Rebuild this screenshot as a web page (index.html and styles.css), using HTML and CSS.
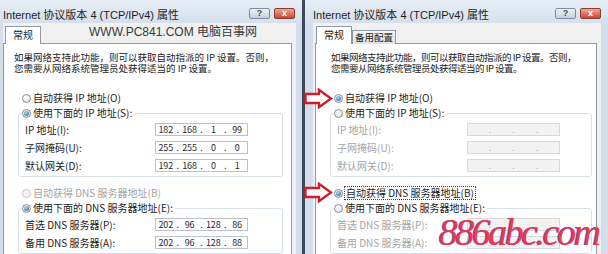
FILE: index.html
```html
<!DOCTYPE html>
<html lang="zh-CN">
<head>
    <meta charset="UTF-8">
    <title>Internet 协议版本 4 (TCP/IPv4) 属性</title>
    <link rel="stylesheet" href="styles.css">
</head>
<body>
    <div class="screen">
        <!-- Left dialog: manual address -->
        <div class="win win-left">
            <div class="titlebar">
                <span class="title">Internet 协议版本 4 (TCP/IPv4) 属性</span>
                <div class="caption-btns">
                    <span class="cbtn help">?</span>
                    <span class="cbtn close">x</span>
                </div>
            </div>
            <div class="body">
                <div class="tabs">
                    <span class="tab active">常规</span>
                    <span class="site-mark">WWW.PC841.COM 电脑百事网</span>
                </div>
                <div class="panel">
                    <p class="intro">如果网络支持此功能，则可以获取自动指派的 IP 设置。否则，<br>您需要从网络系统管理员处获得适当的 IP 设置。</p>

                    <div class="opt"><span class="radio"></span>自动获得 IP 地址(O)</div>
                    <fieldset class="group">
                        <legend><span class="opt"><span class="radio on"></span>使用下面的 IP 地址(S):</span></legend>
                        <div class="row">
                            <span class="row-label">IP 地址(I):</span>
                            <div class="ipbox"><span>182</span><i>.</i><span>168</span><i>.</i><span>1</span><i>.</i><span>99</span></div>
                        </div>
                        <div class="row">
                            <span class="row-label">子网掩码(U):</span>
                            <div class="ipbox"><span>255</span><i>.</i><span>255</span><i>.</i><span>0</span><i>.</i><span>0</span></div>
                        </div>
                        <div class="row">
                            <span class="row-label">默认网关(D):</span>
                            <div class="ipbox"><span>192</span><i>.</i><span>168</span><i>.</i><span>0</span><i>.</i><span>1</span></div>
                        </div>
                    </fieldset>

                    <div class="opt dim dns-auto"><span class="radio off"></span>自动获得 DNS 服务器地址(B)</div>
                    <fieldset class="group">
                        <legend><span class="opt"><span class="radio on"></span>使用下面的 DNS 服务器地址(E):</span></legend>
                        <div class="row">
                            <span class="row-label">首选 DNS 服务器(P):</span>
                            <div class="ipbox"><span>202</span><i>.</i><span>96</span><i>.</i><span>128</span><i>.</i><span>86</span></div>
                        </div>
                        <div class="row">
                            <span class="row-label">备用 DNS 服务器(A):</span>
                            <div class="ipbox"><span>202</span><i>.</i><span>96</span><i>.</i><span>128</span><i>.</i><span>88</span></div>
                        </div>
                    </fieldset>
                </div>
            </div>
        </div>

        <div class="divider"></div>

        <!-- Right dialog: automatic address -->
        <div class="win win-right">
            <div class="titlebar">
                <span class="title">Internet 协议版本 4 (TCP/IPv4) 属性</span>
                <div class="caption-btns">
                    <span class="cbtn help">?</span>
                    <span class="cbtn close">x</span>
                </div>
            </div>
            <div class="body">
                <div class="tabs">
                    <span class="tab active">常规</span>
                    <span class="tab">备用配置</span>
                </div>
                <div class="panel">
                    <p class="intro">如果网络支持此功能，则可以获取自动指派的 IP 设置。否则，<br>您需要从网络系统管理员处获得适当的 IP 设置。</p>

                    <div class="opt"><span class="radio on"></span>自动获得 IP 地址(O)</div>
                    <fieldset class="group">
                        <legend><span class="opt"><span class="radio"></span>使用下面的 IP 地址(S):</span></legend>
                        <div class="row dim">
                            <span class="row-label">IP 地址(I):</span>
                            <div class="ipbox off"><span></span><i>.</i><span></span><i>.</i><span></span><i>.</i><span></span></div>
                        </div>
                        <div class="row dim">
                            <span class="row-label">子网掩码(U):</span>
                            <div class="ipbox off"><span></span><i>.</i><span></span><i>.</i><span></span><i>.</i><span></span></div>
                        </div>
                        <div class="row dim">
                            <span class="row-label">默认网关(D):</span>
                            <div class="ipbox off"><span></span><i>.</i><span></span><i>.</i><span></span><i>.</i><span></span></div>
                        </div>
                    </fieldset>

                    <div class="opt dns-auto"><span class="radio on"></span><span class="focus">自动获得 DNS 服务器地址(B)</span></div>
                    <fieldset class="group">
                        <legend><span class="opt"><span class="radio"></span>使用下面的 DNS 服务器地址(E):</span></legend>
                        <div class="row dim">
                            <span class="row-label">首选 DNS 服务器(P):</span>
                            <div class="ipbox off"><span></span><i>.</i><span></span><i>.</i><span></span><i>.</i><span></span></div>
                        </div>
                        <div class="row dim">
                            <span class="row-label">备用 DNS 服务器(A):</span>
                            <div class="ipbox off"><span></span><i>.</i><span></span><i>.</i><span></span><i>.</i><span></span></div>
                        </div>
                    </fieldset>
                </div>
            </div>
        </div>

        <!-- Overlays -->
        <svg class="arrow arrow-ip" width="29" height="21" viewBox="0 0 29 21">
            <path d="M1.5 6 H15 V1.8 L27 10.5 L15 19.2 V15 H1.5 Z" fill="#fff" stroke="#cc1f2b" stroke-width="2.4" stroke-linejoin="miter"/>
        </svg>
        <svg class="arrow arrow-dns" width="29" height="21" viewBox="0 0 29 21">
            <path d="M1.5 6 H15 V1.8 L27 10.5 L15 19.2 V15 H1.5 Z" fill="#fff" stroke="#cc1f2b" stroke-width="2.4" stroke-linejoin="miter"/>
        </svg>
        <div class="brand-mark">886abc.com</div>
    </div>
</body>
</html>
```

FILE: styles.css
```css
/* Global */
:root {
    --frame: #d3deea;
    --tab-border: #8f9bab;
    --group-border: #d5dfe5;
    --dim-text: #a4a4a4;
}

* {
    box-sizing: border-box;
}

body {
    margin: 0;
    width: 608px;
    height: 254px;
    overflow: hidden;
    font-family: "Noto Sans CJK SC", "Liberation Sans", sans-serif;
    font-size: 10px;
    color: #1b1b1b;
    background: #ffffff;
}

.screen {
    position: relative;
    display: flex;
    height: 254px;
}

/* Windows */
.win {
    display: flex;
    flex-direction: column;
    height: 254px;
}

.win-left {
    width: 302px;
}

.win-right {
    width: 303px;
}

.divider {
    width: 3px;
    background: #3e4858;
}

.titlebar {
    height: 23px;
    display: flex;
    align-items: flex-start;
    justify-content: space-between;
    padding: 8px 7px 0 3px;
    background: linear-gradient(#e7eef6, #d5e0ec);
    font-family: "Liberation Sans", "Noto Sans CJK SC", sans-serif;
    font-size: 11px;
    line-height: 14px;
    color: #1e1e1e;
}

.win-right .titlebar {
    padding-left: 8px;
}

.caption-btns {
    display: flex;
    gap: 4px;
}

.cbtn {
    width: 21px;
    height: 11px;
    display: flex;
    align-items: center;
    justify-content: center;
    border-radius: 2px;
    font-size: 9px;
    line-height: 9px;
    font-weight: bold;
}

.cbtn.help {
    border: 1px solid #7d8ea3;
    background: linear-gradient(#eef3f8, #c2d0df);
    color: #3c4e66;
}

.cbtn.close {
    border: 1px solid #8a3a2e;
    background: linear-gradient(#eba896, #c94a33);
    color: #ffffff;
}

.body {
    flex: 1;
    display: flex;
    flex-direction: column;
    background: #f0f0f0;
}

.win-left .body {
    border-left: 3px solid var(--frame);
    border-right: 6px solid var(--frame);
    padding-right: 4px;
}

.win-right .body {
    border-left: 8px solid var(--frame);
    border-right: 7px solid var(--frame);
    padding-left: 2px;
    padding-right: 4px;
}

/* Tabs */
.tabs {
    height: 17px;
    margin-top: 3px;
    display: flex;
    align-items: flex-end;
    padding-left: 2px;
}

.win-right .tabs {
    padding-left: 1px;
}

.tab {
    position: relative;
    z-index: 1;
    height: 14px;
    margin-bottom: -1px;
    padding: 0 2px;
    border: 1px solid var(--tab-border);
    border-bottom: none;
    background: linear-gradient(#f4f4f4, #e1e1e1);
    font-size: 9.5px;
    line-height: 12px;
}

.tab.active {
    height: 18px;
    padding: 0 7px;
    background: #ffffff;
    font-size: 10px;
    line-height: 15px;
}

.site-mark {
    align-self: flex-start;
    margin-left: 48px;
    font-family: "Liberation Sans", "Noto Sans CJK SC", sans-serif;
    font-size: 12px;
    line-height: 13px;
    color: #3a3a3a;
}

/* Tab page */
.panel {
    flex: 1;
    padding-top: 8px;
    border: 1px solid var(--tab-border);
    border-bottom: none;
    background: #ffffff;
}

.intro {
    margin: 0 0 0 10px;
    font-size: 9.5px;
    line-height: 11px;
    white-space: nowrap;
}

.win-right .intro {
    margin-left: 15px;
    letter-spacing: -0.5px;
}

.opt {
    display: flex;
    align-items: center;
    gap: 2px;
    height: 14px;
    line-height: 14px;
    white-space: nowrap;
}

.panel > .opt {
    margin: 17px 0 0 18px;
}

.panel > .opt.dns-auto {
    margin-top: 9px;
}

.dim {
    color: var(--dim-text);
}

.focus {
    outline: 1px dotted #444;
    outline-offset: 0;
    padding: 0 1px;
    line-height: 12px;
}

/* Radio buttons */
.radio {
    position: relative;
    flex: none;
    width: 9px;
    height: 9px;
    border: 1px solid #8a8f96;
    border-radius: 50%;
    background: radial-gradient(circle at 40% 35%, #ffffff, #d6d9dd);
}

.radio.on::after {
    content: "";
    position: absolute;
    inset: 1px;
    border-radius: 50%;
    background: radial-gradient(circle at 40% 35%, #a7d8f3, #1d5e98);
}

.radio.off {
    border-color: #c4c7cb;
    background: #f3f3f3;
}

/* Group boxes */
.group {
    margin: 1px 8px 0 14px;
    padding: 0 0 2px 3px;
    min-inline-size: 0;
    border: 1px solid var(--group-border);
    border-radius: 3px;
}

.win-right .group {
    margin-right: 4px;
}

.group legend {
    padding: 0 2px 0 0;
}

.row {
    display: flex;
    align-items: center;
    height: 18px;
    padding-left: 3px;
    white-space: nowrap;
}

.row-label {
    width: 130px;
    flex: none;
}

/* IP address field */
.ipbox {
    width: 93px;
    height: 13px;
    display: flex;
    align-items: center;
    border: 1px solid #bcc1c8;
    background: #ffffff;
    font-size: 9px;
    line-height: 11px;
    color: #2a2a2a;
}

.ipbox span {
    flex: 1;
    text-align: center;
}

.ipbox i {
    width: 4px;
    font-style: normal;
    text-align: center;
}

.ipbox.off {
    border-color: #d9d9d9;
    background: #f2f2f2;
    color: #b4b4b4;
}

/* Overlays */
.arrow {
    position: absolute;
    left: 304px;
}

.arrow-ip {
    top: 88px;
}

.arrow-dns {
    top: 182px;
}

.brand-mark {
    position: absolute;
    left: 439px;
    top: 213px;
    font-family: "Liberation Serif", serif;
    font-style: italic;
    font-size: 38px;
    line-height: 38px;
    letter-spacing: -2.5px;
    color: #f0384a;
    text-shadow: -1px 0 0 #5a66d8;
}
```
